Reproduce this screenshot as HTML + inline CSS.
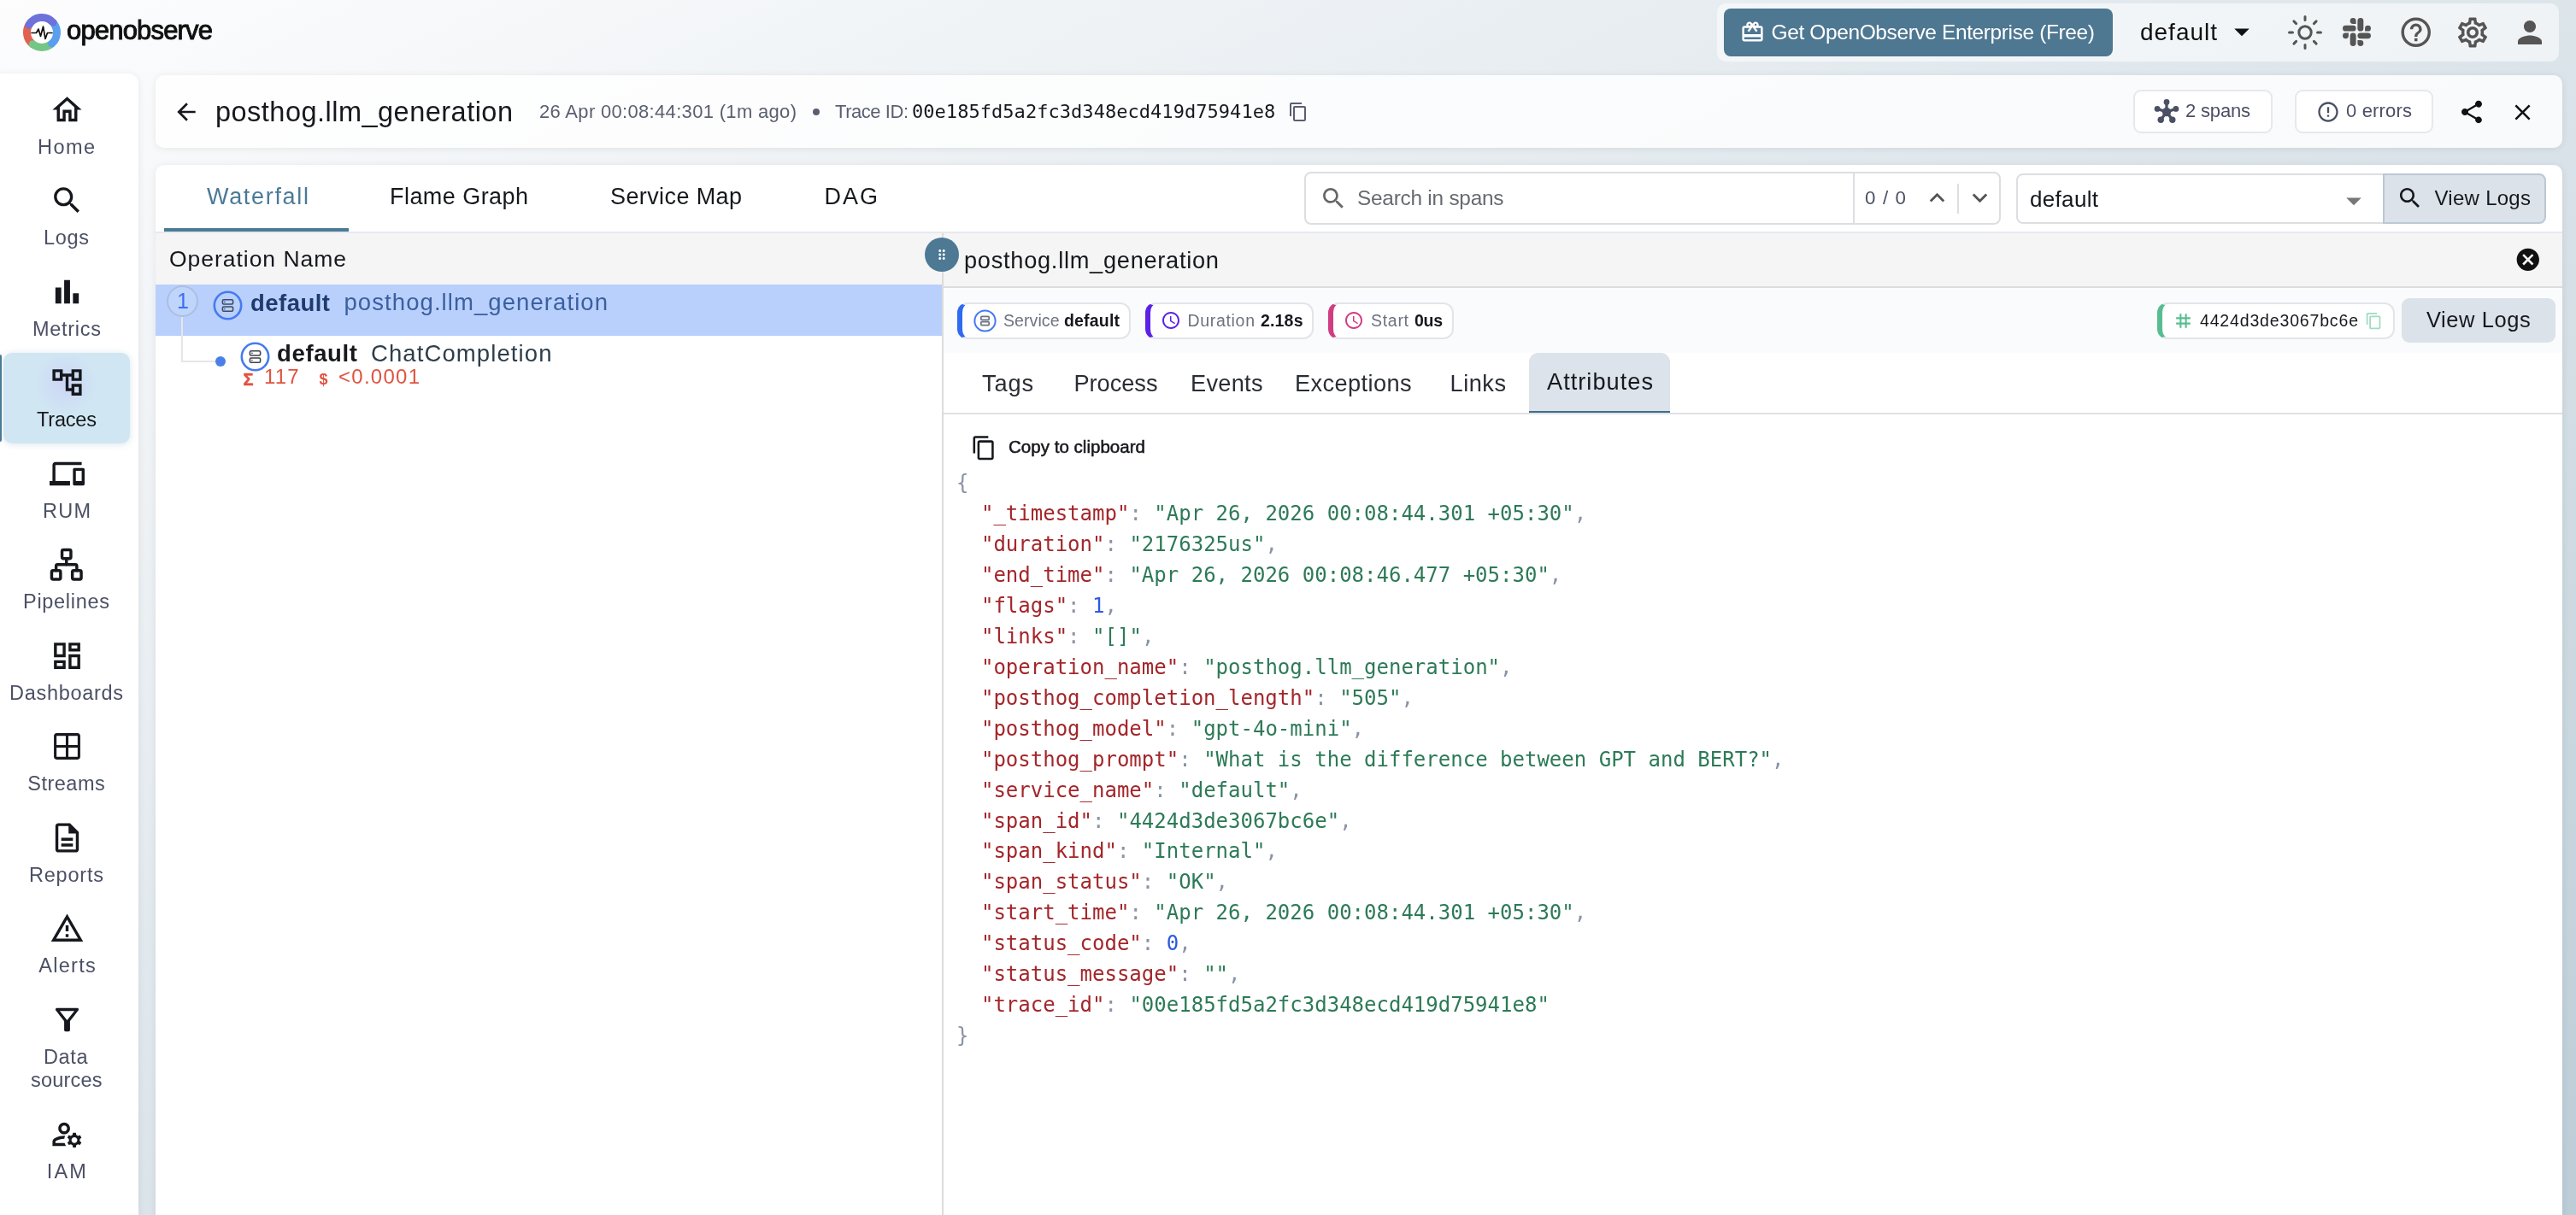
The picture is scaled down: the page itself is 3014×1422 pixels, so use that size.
<!DOCTYPE html>
<html lang="en"><head><meta charset="utf-8"><title>OpenObserve - Traces</title>
<style>
*{box-sizing:border-box}
html,body{margin:0;padding:0}
body{width:3014px;height:1422px;overflow:hidden;position:relative;font-family:"Liberation Sans",sans-serif;
background:linear-gradient(to bottom right,#fdfdfe 0%,#bccdd7 100%);}
#app{position:absolute;left:0;top:0;width:3014px;height:1422px;will-change:transform}
.a{position:absolute;display:block}
.t{position:absolute;white-space:pre;line-height:1;display:block}
.card{position:absolute;background:#fff;border-radius:10px;box-shadow:0 1px 8px rgba(0,0,0,.08)}
</style></head>
<body>
<div id="app">
<svg class="a" style="left:24px;top:13px" width="50" height="50" viewBox="-25 -25 50 50" fill="none" stroke-width="9" stroke-linecap="round">
<circle r="13" fill="#fff" stroke="none"/>
<path d="M-10.77 13.79 A17.5 17.5 0 0 1 -14.84 -9.27" stroke="#e2604f"/>
<path d="M10.77 13.79 A17.5 17.5 0 0 1 -10.77 13.79" stroke="#74c686"/>
<path d="M13.79 -10.77 A17.5 17.5 0 0 1 11.71 13.01" stroke="#5a9fee"/>
<path d="M-15.16 -8.75 A17.5 17.5 0 0 1 13.01 -11.71" stroke="#6d72db"/>
<path d="M-12 0.5 H-6.5 L-4 -4 L-1.5 4.5 L1.5 -7 L4 7.5 L6.5 0.5 H12" stroke="#111" stroke-width="1.7" stroke-linejoin="round" stroke-linecap="round"/>
</svg>
<span id="logo" class="t" style="left:78.00px;top:19.76px;font-size:31px;color:#111;letter-spacing:-0.825px;-webkit-text-stroke:0.95px #111;">openobserve</span>
<div class="a" style="left:2009px;top:4px;width:985px;height:68px;background:rgba(255,255,255,.55);border-radius:10px"></div>
<div class="a" style="left:2017px;top:10px;width:455px;height:56px;background:#4e7791;border-radius:8px"></div>
<svg class="a" style="left:2036px;top:23px" width="29" height="29" viewBox="0 0 24 24" fill="#fff" ><path d="M20 6h-2.18c.11-.31.18-.65.18-1 0-1.66-1.34-3-3-3-1.05 0-1.96.54-2.5 1.35l-.5.67-.5-.68C10.960 2.54 10.050 2 9 2 7.340 2 6 3.340 6 5c0 .35.07.69.18 1H4c-1.110 0-1.990.89-1.990 2L2 19c0 1.110.89 2 2 2h16c1.110 0 2-.89 2-2V8c0-1.110-.89-2-2-2zm-5-2c.55 0 1 .45 1 1s-.45 1-1 1-1-.45-1-1 .45-1 1-1zM9 4c.55 0 1 .45 1 1s-.45 1-1 1-1-.45-1-1 .45-1 1-1zm11 15H4v-2h16v2zm0-5H4V8h5.080L7 10.830 8.620 12 11 8.760l1-1.360 1 1.360L15.380 12 17 10.830 14.920 8H20v6z"/></svg>
<span id="ent" class="t" style="left:2072.50px;top:25.51px;font-size:24.5px;color:#fff;letter-spacing:-0.385px;">Get OpenObserve Enterprise (Free)</span>
<span id="org" class="t" style="left:2504.00px;top:23.55px;font-size:28px;color:#111;letter-spacing:0.987px;">default</span>
<svg class="a" style="left:2602px;top:16px" width="42" height="42" viewBox="0 0 24 24" fill="#111" ><path d="M7 10l5 5 5-5z"/></svg>
<svg class="a" style="left:2675px;top:16px" width="44" height="44" viewBox="-22 -22 44 44" fill="none" stroke="#555" stroke-width="3" stroke-linecap="round">
<circle r="7.2"/>
<path d="M0 -18.5V-14.5M0 18.500V14.500M-18.500 0H-14.500M18.500 0H14.500M-13.100 -13.100L-10.400 -10.400M13.100 13.100L10.400 10.400M-13.100 13.100L-10.400 10.400M13.100 -13.100L10.400 -10.400"/>
</svg>
<svg class="a" style="left:2741px;top:20.5px" width="33" height="33" viewBox="0 0 24 24" fill="#555"><path d="M5.042 15.165a2.528 2.528 0 0 1-2.52 2.523A2.528 2.528 0 0 1 0 15.165a2.527 2.527 0 0 1 2.522-2.52h2.52v2.52zM6.313 15.165a2.527 2.527 0 0 1 2.521-2.52 2.527 2.527 0 0 1 2.521 2.52v6.313A2.528 2.528 0 0 1 8.834 24a2.528 2.528 0 0 1-2.521-2.522v-6.313zM8.834 5.042a2.528 2.528 0 0 1-2.521-2.52A2.528 2.528 0 0 1 8.834 0a2.528 2.528 0 0 1 2.521 2.522v2.52H8.834zM8.834 6.313a2.528 2.528 0 0 1 2.521 2.521 2.528 2.528 0 0 1-2.521 2.521H2.522A2.528 2.528 0 0 1 0 8.834a2.528 2.528 0 0 1 2.522-2.521h6.312zM18.956 8.834a2.528 2.528 0 0 1 2.522-2.521A2.528 2.528 0 0 1 24 8.834a2.528 2.528 0 0 1-2.522 2.521h-2.522V8.834zM17.688 8.834a2.528 2.528 0 0 1-2.523 2.521 2.527 2.527 0 0 1-2.52-2.521V2.522A2.527 2.527 0 0 1 15.165 0a2.528 2.528 0 0 1 2.523 2.522v6.312zM15.165 18.956a2.528 2.528 0 0 1 2.523 2.522A2.528 2.528 0 0 1 15.165 24a2.527 2.527 0 0 1-2.520-2.522v-2.522h2.520zM15.165 17.688a2.527 2.527 0 0 1-2.520-2.523 2.526 2.526 0 0 1 2.520-2.520h6.313A2.527 2.527 0 0 1 24 15.165a2.528 2.528 0 0 1-2.522 2.523h-6.313z"/></svg>
<svg class="a" style="left:2805.5px;top:16.5px" width="41.5" height="41.5" viewBox="0 0 24 24" fill="#555" ><path d="M11 18h2v-2h-2v2zm1-16C6.48 2 2 6.48 2 12s4.48 10 10 10 10-4.48 10-10S17.52 2 12 2zm0 18c-4.41 0-8-3.59-8-8s3.59-8 8-8 8 3.59 8 8-3.59 8-8 8zm0-14c-2.21 0-4 1.79-4 4h2c0-1.1.9-2 2-2s2 .9 2 2c0 2-3 1.75-3 5h2c0-2.25 3-2.5 3-5 0-2.21-1.79-4-4-4z"/></svg>
<svg class="a" style="left:2871.5px;top:16.5px" width="42" height="42" viewBox="0 0 24 24" fill="#555" ><path d="M19.43 12.98c.04-.32.07-.64.07-.98 0-.34-.03-.66-.07-.98l2.11-1.65c.19-.15.24-.42.12-.64l-2-3.46c-.09-.16-.26-.25-.44-.25-.06 0-.12.01-.17.03l-2.49 1c-.52-.4-1.08-.73-1.69-.98l-.38-2.65C14.46 2.18 14.25 2 14 2h-4c-.25 0-.46.18-.49.42l-.38 2.65c-.61.25-1.17.59-1.69.98l-2.49-1c-.06-.02-.12-.03-.18-.03-.17 0-.34.09-.43.25l-2 3.46c-.13.22-.07.49.12.64l2.11 1.65c-.04.32-.07.65-.07.98 0 .33.03.66.07.98l-2.11 1.65c-.19.15-.24.42-.12.64l2 3.46c.09.16.26.25.44.25.06 0 .12-.01.17-.03l2.49-1c.52.4 1.08.73 1.69.98l.38 2.65c.03.24.24.42.49.42h4c.25 0 .46-.18.49-.42l.38-2.65c.61-.25 1.17-.59 1.69-.98l2.49 1c.06.02.12.03.18.03.17 0 .34-.09.43-.25l2-3.46c.12-.22.07-.49-.12-.64l-2.11-1.65zm-1.98-1.71c.04.31.05.52.05.73 0 .21-.02.43-.05.73l-.14 1.13.89.7 1.08.84-.7 1.21-1.27-.51-1.04-.42-.9.68c-.43.32-.84.56-1.25.73l-1.06.43-.16 1.13-.2 1.35h-1.4l-.19-1.35-.16-1.13-1.06-.43c-.43-.18-.83-.41-1.23-.71l-.91-.7-1.06.43-1.27.51-.7-1.21 1.08-.84.89-.7-.14-1.13c-.03-.31-.05-.54-.05-.74s.02-.43.05-.73l.14-1.13-.89-.7-1.08-.84.7-1.21 1.27.51 1.04.42.9-.68c.43-.32.84-.56 1.25-.73l1.06-.43.16-1.13.2-1.35h1.39l.19 1.35.16 1.13 1.06.43c.43.18.83.41 1.23.71l.91.7 1.06-.43 1.27-.51.7 1.21-1.07.85-.89.7.14 1.13zM12 8c-2.21 0-4 1.79-4 4s1.79 4 4 4 4-1.79 4-4-1.79-4-4-4zm0 6c-1.1 0-2-.9-2-2s.9-2 2-2 2 .9 2 2-.9 2-2 2z"/></svg>
<svg class="a" style="left:2939px;top:16.5px" width="42" height="42" viewBox="0 0 24 24" fill="#555" ><path d="M12 12c2.21 0 4-1.79 4-4s-1.79-4-4-4-4 1.79-4 4 1.79 4 4 4zm0 2c-2.67 0-8 1.34-8 4v2h16v-2c0-2.66-5.33-4-8-4z"/></svg>
<div class="card" style="left:-12px;top:86px;width:174px;height:1360px;border-radius:12px"></div>
<div class="a" style="left:4px;top:413px;width:148px;height:106px;background:radial-gradient(circle 38px at 73px 36px,#ccd5f5 0%,#d0e7f3 100%);background-color:#d0e7f3;border-radius:10px;box-shadow:0 1px 9px rgba(80,130,160,.20)"></div>
<div class="a" style="left:0px;top:415px;width:2px;height:102px;background:#4a7a96;border-radius:0 2px 2px 0"></div>
<svg class="a" style="left:57.5px;top:107.5px" width="41" height="41" viewBox="0 0 24 24" fill="#16181d" ><path d="M12 5.69l5 4.5V18h-2v-6H9v6H7v-7.81l5-4.5M12 3L2 12h3v8h6v-6h2v6h6v-8h3L12 3z"/></svg>
<span id="s_Home" class="t" style="left:44.00px;top:161.36px;font-size:23.5px;color:#4b5064;letter-spacing:1.438px;">Home</span>
<svg class="a" style="left:57.5px;top:214.0px" width="41" height="41" viewBox="0 0 24 24" fill="#16181d" ><path d="M15.5 14h-.79l-.28-.27C15.41 12.59 16 11.11 16 9.5 16 5.91 13.09 3 9.5 3S3 5.91 3 9.5 5.91 16 9.5 16c1.61 0 3.09-.59 4.23-1.57l.27.28v.79l5 4.99L20.49 19l-4.99-5zm-6 0C7.01 14 5 11.99 5 9.5S7.01 5 9.5 5 14 7.01 14 9.5 11.99 14 9.5 14z"/></svg>
<span id="s_Logs" class="t" style="left:51.00px;top:267.36px;font-size:23.5px;color:#4b5064;letter-spacing:0.677px;">Logs</span>
<svg class="a" style="left:57.5px;top:320.5px" width="41" height="41" viewBox="0 0 24 24" fill="#16181d" ><path d="M4 9h4v11H4zm12 4h4v7h-4zm-6-9h4v16h-4z"/></svg>
<span id="s_Metrics" class="t" style="left:38.00px;top:374.36px;font-size:23.5px;color:#4b5064;letter-spacing:0.711px;">Metrics</span>
<svg class="a" style="left:57.5px;top:427.0px" width="41" height="41" viewBox="0 0 24 24" fill="#16181d" ><path d="M22 11V3h-7v3H9V3H2v8h7V8h2v10h4v3h7v-8h-7v3h-2V8h2v3h7zM7 9H4V5h3v4zm10 6h3v4h-3v-4zm0-10h3v4h-3V5z"/></svg>
<span id="s_Traces" class="t" style="left:43.00px;top:480.36px;font-size:23.5px;color:#16181d;letter-spacing:-0.191px;">Traces</span>
<svg class="a" style="left:57.5px;top:533.5px" width="41" height="41" viewBox="0 0 24 24" fill="#16181d" ><path d="M4 6h18V4H4c-1.1 0-2 .9-2 2v11H0v3h14v-3H4V6zm19 2h-6c-.55 0-1 .45-1 1v10c0 .55.45 1 1 1h6c.55 0 1-.45 1-1V9c0-.55-.45-1-1-1zm-1 9h-4v-7h4v7z"/></svg>
<span id="s_RUM" class="t" style="left:50.00px;top:586.86px;font-size:23.5px;color:#4b5064;letter-spacing:1.234px;">RUM</span>
<svg class="a" style="left:57px;top:640.0px" width="41.5" height="41.5" viewBox="0 0 24 24" fill="none" stroke="#16181d" stroke-width="2" stroke-linecap="round" stroke-linejoin="round"><rect x="16" y="16" width="6" height="6" rx="1"/><rect x="2" y="16" width="6" height="6" rx="1"/><rect x="9" y="2" width="6" height="6" rx="1"/><path d="M5 16v-3a1 1 0 0 1 1-1h12a1 1 0 0 1 1 1v3"/><path d="M12 12V8"/></svg>
<span id="s_Pipelines" class="t" style="left:27.00px;top:693.36px;font-size:23.5px;color:#4b5064;letter-spacing:0.703px;">Pipelines</span>
<svg class="a" style="left:57.5px;top:746.5px" width="41" height="41" viewBox="0 0 24 24" fill="#16181d" ><path d="M19 5v2h-4V5h4M9 5v6H5V5h4m10 8v6h-4v-6h4M9 17v2H5v-2h4M21 3h-8v6h8V3zM11 3H3v10h8V3zm10 8h-8v10h8V11zm-10 4H3v6h8v-6z"/></svg>
<span id="s_Dashboards" class="t" style="left:11.00px;top:799.86px;font-size:23.5px;color:#4b5064;letter-spacing:0.698px;">Dashboards</span>
<svg class="a" style="left:59.5px;top:855.0px" width="37" height="37" viewBox="0 0 24 24" fill="#16181d" ><path d="M20 2H4c-1.1 0-2 .9-2 2v16c0 1.1.9 2 2 2h16c1.1 0 2-.9 2-2V4c0-1.1-.9-2-2-2zm0 9h-7V4h7v7zm-9-7v7H4V4h7zm-7 9h7v7H4v-7zm9 7v-7h7v7h-7z"/></svg>
<span id="s_Streams" class="t" style="left:32.20px;top:906.36px;font-size:23.5px;color:#4b5064;letter-spacing:0.517px;">Streams</span>
<svg class="a" style="left:57.5px;top:959.5px" width="41" height="41" viewBox="0 0 24 24" fill="#16181d" ><path d="M8 16h8v2H8zm0-4h8v2H8zm6-10H6c-1.1 0-2 .9-2 2v16c0 1.1.89 2 1.99 2H18c1.1 0 2-.9 2-2V8l-6-6zm4 18H6V4h7v5h5v11z"/></svg>
<span id="s_Reports" class="t" style="left:34.00px;top:1012.86px;font-size:23.5px;color:#4b5064;letter-spacing:0.784px;">Reports</span>
<svg class="a" style="left:57.5px;top:1066.0px" width="41" height="41" viewBox="0 0 24 24" fill="#16181d" ><path d="M12 5.99L19.53 19H4.47L12 5.99M12 2L1 21h22L12 2zm1 14h-2v2h2v-2zm0-6h-2v4h2v-4z"/></svg>
<span id="s_Alerts" class="t" style="left:45.20px;top:1119.36px;font-size:23.5px;color:#4b5064;letter-spacing:1.304px;">Alerts</span>
<svg class="a" style="left:57.5px;top:1172.5px" width="41" height="41" viewBox="0 0 24 24" fill="#16181d" ><path d="M7 6h10l-5.01 6.3L7 6zm-2.75-.39C6.27 8.2 10 13 10 13v6c0 .55.45 1 1 1h2c.55 0 1-.45 1-1v-6s3.72-4.8 5.74-7.39c.51-.66.04-1.61-.79-1.61H5.04c-.83 0-1.3.95-.79 1.61z"/></svg>
<span id="s_Data" class="t" style="left:51.00px;top:1225.86px;font-size:23.5px;color:#4b5064;letter-spacing:0.653px;">Data</span>
<svg class="a" style="left:57.5px;top:1307.0px" width="41" height="41" viewBox="0 0 24 24" fill="#16181d" ><path d="M4 18v-.65c0-.34.16-.66.41-.81C6.1 15.53 8.03 15 10 15c.03 0 .05 0 .08.01.1-.7.3-1.37.59-1.98-.22-.02-.44-.03-.67-.03-2.42 0-4.68.67-6.61 1.82-.88.52-1.39 1.5-1.39 2.53V20h9.26c-.42-.6-.75-1.28-.97-2H4zm6-6c2.21 0 4-1.79 4-4s-1.79-4-4-4-4 1.79-4 4 1.79 4 4 4zm0-6c1.1 0 2 .9 2 2s-.9 2-2 2-2-.9-2-2 .9-2 2-2zm10.750 10c0-.22-.03-.42-.06-.63l1.140-1.010-1-1.730-1.450.49c-.32-.27-.68-.48-1.080-.63L18 11h-2l-.3 1.490c-.4.15-.76.36-1.080.63l-1.450-.49-1 1.730 1.140 1.010c-.03.21-.06.41-.06.63s.03.42.06.63l-1.140 1.010 1 1.730 1.450-.49c.32.27.68.48 1.080.63L16 21h2l.3-1.490c.4-.15.76-.36 1.080-.63l1.450.49 1-1.730-1.140-1.010c.03-.21.06-.41.06-.63zM17 18c-1.100 0-2-.9-2-2s.9-2 2-2 2 .9 2 2-.9 2-2 2z"/></svg>
<span id="s_IAM" class="t" style="left:54.80px;top:1360.36px;font-size:23.5px;color:#4b5064;letter-spacing:2.109px;">IAM</span>
<span id="s_sources" class="t" style="left:36.00px;top:1253.36px;font-size:23.5px;color:#4b5064;letter-spacing:0.184px;">sources</span>
<div class="card" style="left:182px;top:88px;width:2816px;height:85px;background:rgba(255,255,255,.82)"></div>
<svg class="a" style="left:202px;top:115px" width="32" height="32" viewBox="0 0 24 24" fill="#16181d" ><path d="M20 11H7.83l5.59-5.59L12 4l-8 8 8 8 1.41-1.41L7.83 13H20v-2z"/></svg>
<span id="title" class="t" style="left:252.00px;top:115.24px;font-size:32.5px;color:#16181d;letter-spacing:0.482px;">posthog.llm_generation</span>
<span id="ts" class="t" style="left:631.00px;top:119.63px;font-size:22px;color:#5a5f70;letter-spacing:0.321px;">26 Apr 00:08:44:301 (1m ago)</span>
<div class="a" style="left:950.5px;top:127px;width:8.0px;height:8px;background:#5a5f70;border-radius:50%"></div>
<span id="tidl" class="t" style="left:977.00px;top:119.63px;font-size:22px;color:#5a5f70;letter-spacing:-0.457px;">Trace ID:</span>
<span id="tid" class="t" style="left:1067.00px;top:119.89px;font-size:22px;color:#16181d;font-family:'DejaVu Sans Mono', 'Liberation Mono', monospace;letter-spacing:0.044px;">00e185fd5a2fc3d348ecd419d75941e8</span>
<svg class="a" style="left:1507.4px;top:119px" width="24" height="24" viewBox="0 0 24 24" fill="#5a5f70" ><path d="M16 1H4c-1.1 0-2 .9-2 2v14h2V3h12V1zm3 4H8c-1.1 0-2 .9-2 2v14c0 1.1.9 2 2 2h11c1.1 0 2-.9 2-2V7c0-1.1-.9-2-2-2zm0 16H8V7h11v14z"/></svg>
<div class="a" style="left:2495.5px;top:105px;width:163.5px;height:51px;background:#fff;border:2px solid #e6e8ed;border-radius:9px"></div>
<svg class="a" style="left:2519px;top:115px" width="32" height="32" viewBox="-16 -16 32 32" fill="#4b5064" stroke="#4b5064" stroke-width="3.3">
<path d="M0 0L0 -11.500M0 0L10.900 -3.600M0 0L6.800 9.300M0 0L-6.800 9.300M0 0L-10.900 -3.600" fill="none"/>
<circle r="5.200" stroke="none"/><circle cx="0" cy="-11.500" r="3.400" stroke="none"/><circle cx="10.900" cy="-3.600" r="3.400" stroke="none"/><circle cx="6.800" cy="9.300" r="3.700" stroke="none"/><circle cx="-6.800" cy="9.300" r="3.700" stroke="none"/><circle cx="-10.900" cy="-3.600" r="3.400" stroke="none"/>
</svg>
<span id="spans" class="t" style="left:2557.00px;top:119.13px;font-size:22px;color:#4b5064;letter-spacing:-0.177px;">2 spans</span>
<div class="a" style="left:2684.5px;top:105px;width:162.5px;height:51px;background:#fff;border:2px solid #e6e8ed;border-radius:9px"></div>
<svg class="a" style="left:2709.5px;top:117px" width="28" height="28" viewBox="0 0 24 24" fill="#4b5064" ><path d="M11 15h2v2h-2zm0-8h2v6h-2zm.99-5C6.47 2 2 6.48 2 12s4.47 10 9.990 10C17.520 22 22 17.520 22 12S17.520 2 11.990 2zM12 20c-4.420 0-8-3.580-8-8s3.580-8 8-8 8 3.580 8 8-3.580 8-8 8z"/></svg>
<span id="errors" class="t" style="left:2745.00px;top:119.13px;font-size:22px;color:#4b5064;letter-spacing:0.172px;">0 errors</span>
<svg class="a" style="left:2876px;top:115px" width="32" height="32" viewBox="0 0 24 24" fill="#111" ><path d="M18 16.08c-.76 0-1.44.3-1.96.77L8.91 12.7c.05-.23.09-.46.09-.7s-.04-.47-.09-.7l7.05-4.11c.54.5 1.25.81 2.04.81 1.66 0 3-1.34 3-3s-1.34-3-3-3-3 1.34-3 3c0 .24.04.47.09.7L8.04 9.81C7.5 9.31 6.79 9 6 9c-1.66 0-3 1.34-3 3s1.34 3 3 3c.79 0 1.5-.31 2.04-.81l7.12 4.16c-.05.21-.08.43-.08.65 0 1.61 1.31 2.92 2.92 2.92 1.61 0 2.92-1.31 2.92-2.920s-1.310-2.920-2.920-2.920z"/></svg>
<svg class="a" style="left:2936.25px;top:115.5px" width="31" height="31" viewBox="0 0 24 24" fill="#111" ><path d="M19 6.41L17.59 5 12 10.59 6.41 5 5 6.41 10.59 12 5 17.59 6.41 19 12 13.41 17.59 19 19 17.59 13.41 12z"/></svg>
<div class="card" style="left:182px;top:193px;width:2816px;height:1260px"></div>
<span id="tab1" class="t" style="left:242.00px;top:216.64px;font-size:27px;color:#4a7a96;letter-spacing:1.684px;">Waterfall</span>
<span id="tab2" class="t" style="left:456.00px;top:216.64px;font-size:27px;color:#16181d;letter-spacing:0.444px;">Flame Graph</span>
<span id="tab3" class="t" style="left:714.00px;top:216.64px;font-size:27px;color:#16181d;letter-spacing:0.394px;">Service Map</span>
<span id="tab4" class="t" style="left:964.50px;top:216.64px;font-size:27px;color:#16181d;letter-spacing:1.992px;">DAG</span>
<div class="a" style="left:192px;top:267px;width:216px;height:4px;background:#4a7a96"></div>
<div class="a" style="left:1526px;top:200.5px;width:815px;height:62.5px;border:2px solid #dcdee1;border-radius:8px;background:#fff"></div>
<div class="a" style="left:2168px;top:202px;width:2px;height:59.5px;background:#dcdee1"></div>
<svg class="a" style="left:1543.9px;top:215.9px" width="32.6" height="32.6" viewBox="0 0 24 24" fill="#666" ><path d="M15.5 14h-.79l-.28-.27C15.41 12.59 16 11.11 16 9.5 16 5.91 13.09 3 9.5 3S3 5.91 3 9.5 5.91 16 9.5 16c1.61 0 3.09-.59 4.23-1.57l.27.28v.79l5 4.99L20.49 19l-4.99-5zm-6 0C7.01 14 5 11.99 5 9.5S7.01 5 9.5 5 14 7.01 14 9.5 11.99 14 9.5 14z"/></svg>
<span id="srch" class="t" style="left:1588.00px;top:219.85px;font-size:24.4px;color:#666b70;letter-spacing:-0.243px;">Search in spans</span>
<span id="zz" class="t" style="left:2182.00px;top:221.12px;font-size:22.3px;color:#4b5064;letter-spacing:1.152px;">0 / 0</span>
<svg class="a" style="left:2248.5px;top:214.4px" width="35" height="35" viewBox="0 0 24 24" fill="#555" ><path d="M7.41 15.41L12 10.830l4.590 4.580L18 14l-6-6-6 6z"/></svg>
<div class="a" style="left:2290px;top:214.5px;width:2px;height:35.0px;background:#dcdee1"></div>
<svg class="a" style="left:2298.5px;top:213.6px" width="35" height="35" viewBox="0 0 24 24" fill="#555" ><path d="M7.41 8.590L12 13.170l4.590-4.580L18 10l-6 6-6-6 1.410-1.410z"/></svg>
<div class="a" style="left:2358.5px;top:203px;width:431.5px;height:58.5px;border:2px solid #dcdee1;border-radius:8px 0 0 8px;background:#fff"></div>
<span id="sel" class="t" style="left:2375.00px;top:219.99px;font-size:26px;color:#16181d;letter-spacing:0.321px;">default</span>
<svg class="a" style="left:2733px;top:213.5px" width="42" height="42" viewBox="0 0 24 24" fill="#777" ><path d="M7 10l5 5 5-5z"/></svg>
<div class="a" style="left:2788px;top:202.5px;width:191px;height:59.5px;background:#dbe2ea;border:2px solid #bcc8d3;border-radius:0 8px 8px 0"></div>
<svg class="a" style="left:2804px;top:216px" width="31.6" height="31.6" viewBox="0 0 24 24" fill="#16181d" ><path d="M15.5 14h-.79l-.28-.27C15.41 12.59 16 11.11 16 9.5 16 5.91 13.09 3 9.5 3S3 5.91 3 9.5 5.91 16 9.5 16c1.61 0 3.09-.59 4.23-1.57l.27.28v.79l5 4.99L20.49 19l-4.99-5zm-6 0C7.01 14 5 11.99 5 9.5S7.01 5 9.5 5 14 7.01 14 9.5 11.99 14 9.5 14z"/></svg>
<span id="vl1" class="t" style="left:2848.50px;top:219.68px;font-size:24px;color:#16181d;letter-spacing:0.275px;">View Logs</span>
<div class="a" style="left:182px;top:271px;width:2816px;height:2px;background:#e6e9ee"></div>
<div class="a" style="left:182px;top:273px;width:920px;height:60px;background:#f5f5f5"></div>
<span id="opn" class="t" style="left:198.00px;top:290.32px;font-size:26.5px;color:#16181d;letter-spacing:0.966px;">Operation Name</span>
<div class="a" style="left:182px;top:333px;width:920px;height:59.5px;background:#b8d0fb"></div>
<div class="a" style="left:212px;top:371px;width:2px;height:52px;background:#e6e6e6"></div>
<div class="a" style="left:212px;top:421.5px;width:40px;height:2.0px;background:#e6e6e6"></div>
<div class="a" style="left:194.5px;top:333.5px;width:37.0px;height:37.0px;border:2px solid rgba(150,160,190,.45);border-radius:50%;background:rgba(255,255,255,.12)"></div>
<span id="one" class="t" style="left:207.00px;top:339.84px;font-size:25px;color:#3b6ef5;letter-spacing:0.000px;">1</span>
<svg class="a" style="left:248.5px;top:340px" width="35" height="35" viewBox="-17.500 -17.500 35 35" fill="none">
<circle r="15.700" stroke="#457af2" stroke-width="2.6" fill="none"/>
<rect x="-6.100" y="-6.700" width="12.200" height="5.200" rx="1.400" stroke="#3d4a66" stroke-width="1.600"/>
<rect x="-6.100" y="1.500" width="12.200" height="5.200" rx="1.400" stroke="#3d4a66" stroke-width="1.600"/>
<circle cx="-3.600" cy="-4.100" r=".8" fill="#3d4a66"/><circle cx="-3.600" cy="4.100" r=".8" fill="#3d4a66"/>
</svg>
<span id="d1" class="t" style="left:293.00px;top:340.72px;font-size:27.5px;color:#1f3a6e;font-weight:700;letter-spacing:0.477px;">default</span>
<span id="r1" class="t" style="left:402.50px;top:340.47px;font-size:27.5px;color:#3b5fa0;letter-spacing:1.076px;">posthog.llm_generation</span>
<div class="a" style="left:252px;top:417px;width:12px;height:12px;background:#4a7fe8;border-radius:50%"></div>
<svg class="a" style="left:280.5px;top:400px" width="35" height="35" viewBox="-17.500 -17.500 35 35" fill="none">
<circle r="15.700" stroke="#457af2" stroke-width="2.6" fill="#fff"/>
<rect x="-6.100" y="-6.700" width="12.200" height="5.200" rx="1.400" stroke="#3d4248" stroke-width="1.600"/>
<rect x="-6.100" y="1.500" width="12.200" height="5.200" rx="1.400" stroke="#3d4248" stroke-width="1.600"/>
<circle cx="-3.600" cy="-4.100" r=".8" fill="#3d4248"/><circle cx="-3.600" cy="4.100" r=".8" fill="#3d4248"/>
</svg>
<span id="d2" class="t" style="left:324.00px;top:400.47px;font-size:27.5px;color:#16181d;font-weight:700;letter-spacing:0.643px;">default</span>
<span id="r2" class="t" style="left:434.00px;top:399.72px;font-size:27.5px;color:#2d3e4a;letter-spacing:1.101px;">ChatCompletion</span>
<span id="sig" class="t" style="left:284.50px;top:433.82px;font-size:20px;color:#e0533f;font-weight:700;letter-spacing:0.000px;-webkit-text-stroke:0.5px #e0533f;">Σ</span>
<span id="n117" class="t" style="left:309.00px;top:428.68px;font-size:24px;color:#e0533f;letter-spacing:1.117px;">117</span>
<span id="dol" class="t" style="left:373.50px;top:434.76px;font-size:18px;color:#e0533f;font-weight:700;letter-spacing:0.000px;">$</span>
<span id="cost" class="t" style="left:396.00px;top:428.68px;font-size:24px;color:#e0533f;letter-spacing:1.263px;">&lt;0.0001</span>
<div class="a" style="left:1102px;top:273px;width:2px;height:1149px;background:#dcdcdc"></div>
<div class="a" style="left:1104px;top:273px;width:1894px;height:62px;background:#f5f5f5"></div>
<div class="a" style="left:1104px;top:335px;width:1894px;height:2px;background:#dcdcdc"></div>
<span id="dt" class="t" style="left:1128.00px;top:290.98px;font-size:27.2px;color:#16181d;letter-spacing:0.731px;">posthog.llm_generation</span>
<svg class="a" style="left:2941.8px;top:287.8px" width="31.6" height="31.6" viewBox="0 0 24 24" fill="#111" ><path d="M12 2C6.47 2 2 6.47 2 12s4.47 10 10 10 10-4.47 10-10S17.53 2 12 2zm5 13.59L15.59 17 12 13.41 8.41 17 7 15.59 10.59 12 7 8.41 8.41 7 12 10.59 15.59 7 17 8.41 13.41 12 17 15.59z"/></svg>
<div class="a" style="left:1082px;top:278px;width:40px;height:40px;background:#4d7994;border-radius:50%"></div>
<svg class="a" style="left:1093px;top:289px" width="18" height="18" viewBox="0 0 24 24" fill="#fff" ><path d="M11 18c0 1.100-.9 2-2 2s-2-.9-2-2 .9-2 2-2 2 .9 2 2zm-2-8c-1.100 0-2 .9-2 2s.9 2 2 2 2-.9 2-2-.9-2-2-2zm0-6c-1.100 0-2 .9-2 2s.9 2 2 2 2-.9 2-2-.9-2-2-2zm6 4c1.100 0 2-.9 2-2s-.9-2-2-2-2 .9-2 2 .9 2 2 2zm0 2c-1.100 0-2 .9-2 2s.9 2 2 2 2-.9 2-2-.9-2-2-2zm0 6c-1.100 0-2 .9-2 2s.9 2 2 2 2-.9 2-2-.9-2-2-2z"/></svg>
<div class="a" style="left:1104px;top:337px;width:1894px;height:75.5px;background:#fafbfc"></div>
<div class="a" style="left:1120px;top:353.5px;width:203px;height:43.0px;background:#fff;border:2px solid #e2e5ea;border-left:6.5px solid #2f6bf2;border-radius:12px"></div>
<svg class="a" style="left:1138.5px;top:361.5px" width="27" height="27" viewBox="-17.500 -17.500 35 35" fill="none">
<circle r="15.700" stroke="#457af2" stroke-width="2.6" fill="none"/>
<rect x="-6.100" y="-6.700" width="12.200" height="5.200" rx="1.400" stroke="#6b7280" stroke-width="2.300"/>
<rect x="-6.100" y="1.500" width="12.200" height="5.200" rx="1.400" stroke="#6b7280" stroke-width="2.300"/>
<circle cx="-3.600" cy="-4.100" r="0" fill="#6b7280"/><circle cx="-3.600" cy="4.100" r="0" fill="#6b7280"/>
</svg>
<span id="b1a" class="t" style="left:1174.00px;top:365.74px;font-size:19.5px;color:#6b7280;letter-spacing:0.078px;">Service</span>
<span id="b1b" class="t" style="left:1245.00px;top:365.74px;font-size:19.5px;color:#16181d;font-weight:700;letter-spacing:0.179px;">default</span>
<div class="a" style="left:1340px;top:353.5px;width:197px;height:43.0px;background:#fff;border:2px solid #e2e5ea;border-left:6.5px solid #5b21e6;border-radius:12px"></div>
<svg class="a" style="left:1358px;top:363px" width="24" height="24" viewBox="0 0 24 24" fill="#5b21e6" ><path d="M11.99 2C6.47 2 2 6.48 2 12s4.47 10 9.990 10C17.520 22 22 17.520 22 12S17.520 2 11.990 2zM12 20c-4.420 0-8-3.580-8-8s3.580-8 8-8 8 3.580 8 8-3.580 8-8 8zm.5-13H11v6l5.250 3.150.75-1.230-4.500-2.670z"/></svg>
<span id="b2a" class="t" style="left:1389.50px;top:365.74px;font-size:19.5px;color:#6b7280;letter-spacing:0.683px;">Duration</span>
<span id="b2b" class="t" style="left:1475.00px;top:365.74px;font-size:19.5px;color:#16181d;font-weight:700;letter-spacing:0.171px;">2.18s</span>
<div class="a" style="left:1553.75px;top:353.5px;width:147.25px;height:43.0px;background:#fff;border:2px solid #e2e5ea;border-left:6.5px solid #d03d83;border-radius:12px"></div>
<svg class="a" style="left:1572px;top:363px" width="24" height="24" viewBox="0 0 24 24" fill="#d03d83" ><path d="M11.99 2C6.47 2 2 6.48 2 12s4.47 10 9.990 10C17.520 22 22 17.520 22 12S17.520 2 11.990 2zM12 20c-4.420 0-8-3.580-8-8s3.580-8 8-8 8 3.580 8 8-3.580 8-8 8zm.5-13H11v6l5.250 3.150.75-1.230-4.500-2.670z"/></svg>
<span id="b3a" class="t" style="left:1604.00px;top:365.74px;font-size:19.5px;color:#6b7280;letter-spacing:0.703px;">Start</span>
<span id="b3b" class="t" style="left:1655.00px;top:365.74px;font-size:19.5px;color:#16181d;font-weight:700;letter-spacing:-0.305px;">0us</span>
<div class="a" style="left:2524px;top:353.5px;width:277.5px;height:43.0px;background:#fff;border:2px solid #e2e5ea;border-left:6.5px solid #57bd91;border-radius:12px"></div>
<svg class="a" style="left:2541.5px;top:362.5px" width="25" height="25" viewBox="0 0 24 24" fill="#57bd91" ><path d="M20 10V8h-4V4h-2v4h-4V4H8v4H4v2h4v4H4v2h4v4h2v-4h4v4h2v-4h4v-2h-4v-4h4zm-6 4h-4v-4h4v4z"/></svg>
<span id="sid" class="t" style="left:2574.00px;top:365.74px;font-size:19.5px;color:#16181d;letter-spacing:0.837px;">4424d3de3067bc6e</span>
<svg class="a" style="left:2767px;top:364.5px" width="21" height="21" viewBox="0 0 24 24" fill="#9fdcc0" ><path d="M16 1H4c-1.1 0-2 .9-2 2v14h2V3h12V1zm3 4H8c-1.1 0-2 .9-2 2v14c0 1.1.9 2 2 2h11c1.1 0 2-.9 2-2V7c0-1.1-.9-2-2-2zm0 16H8V7h11v14z"/></svg>
<div class="a" style="left:2810px;top:349px;width:180px;height:52px;background:#dbe2ea;border-radius:9px"></div>
<span id="vl2" class="t" style="left:2839.00px;top:362.41px;font-size:25.5px;color:#16181d;letter-spacing:0.575px;">View Logs</span>
<div class="a" style="left:1789px;top:413px;width:165px;height:69.5px;background:#dce3ea;border-radius:11px 11px 0 0"></div>
<div class="a" style="left:1104px;top:483px;width:1894px;height:1.75px;background:#dfe1e4"></div>
<div class="a" style="left:1789px;top:480.5px;width:165px;height:2.0px;background:#3f6e8c"></div>
<span id="dtab0" class="t" style="left:1149.00px;top:435.23px;font-size:27.2px;color:#2a2d34;letter-spacing:0.854px;">Tags</span>
<span id="dtab1" class="t" style="left:1256.50px;top:435.23px;font-size:27.2px;color:#2a2d34;letter-spacing:-0.036px;">Process</span>
<span id="dtab2" class="t" style="left:1393.00px;top:435.23px;font-size:27.2px;color:#2a2d34;letter-spacing:0.275px;">Events</span>
<span id="dtab3" class="t" style="left:1515.00px;top:435.23px;font-size:27.2px;color:#2a2d34;letter-spacing:0.389px;">Exceptions</span>
<span id="dtab4" class="t" style="left:1696.50px;top:435.23px;font-size:27.2px;color:#2a2d34;letter-spacing:0.508px;">Links</span>
<span id="dtab5" class="t" style="left:1810.00px;top:433.23px;font-size:27.2px;color:#16181d;letter-spacing:1.018px;">Attributes</span>
<svg class="a" style="left:1136px;top:508.5px" width="30.5" height="30.5" viewBox="0 0 24 24" fill="#16181d" ><path d="M16 1H4c-1.1 0-2 .9-2 2v14h2V3h12V1zm3 4H8c-1.1 0-2 .9-2 2v14c0 1.1.9 2 2 2h11c1.1 0 2-.9 2-2V7c0-1.1-.9-2-2-2zm0 16H8V7h11v14z"/></svg>
<span id="ctc" class="t" style="left:1180.00px;top:513.15px;font-size:20.5px;color:#16181d;letter-spacing:0.028px;-webkit-text-stroke:0.55px #16181d;">Copy to clipboard</span>
<pre id="json" class="a" style="left:1119px;top:548.2px;margin:0;font-family:'DejaVu Sans Mono', 'Liberation Mono', monospace;font-size:24px;line-height:35.93px;letter-spacing:0.005px"><span style="color:#8a93a5">{</span>
  <span style="color:#a3262a">&quot;_timestamp&quot;</span><span style="color:#8a93a5">:</span> <span style="color:#2d7a57">&quot;Apr 26, 2026 00:08:44.301 +05:30&quot;</span><span style="color:#8a93a5">,</span>
  <span style="color:#a3262a">&quot;duration&quot;</span><span style="color:#8a93a5">:</span> <span style="color:#2d7a57">&quot;2176325us&quot;</span><span style="color:#8a93a5">,</span>
  <span style="color:#a3262a">&quot;end_time&quot;</span><span style="color:#8a93a5">:</span> <span style="color:#2d7a57">&quot;Apr 26, 2026 00:08:46.477 +05:30&quot;</span><span style="color:#8a93a5">,</span>
  <span style="color:#a3262a">&quot;flags&quot;</span><span style="color:#8a93a5">:</span> <span style="color:#2b59e0">1</span><span style="color:#8a93a5">,</span>
  <span style="color:#a3262a">&quot;links&quot;</span><span style="color:#8a93a5">:</span> <span style="color:#2d7a57">&quot;[]&quot;</span><span style="color:#8a93a5">,</span>
  <span style="color:#a3262a">&quot;operation_name&quot;</span><span style="color:#8a93a5">:</span> <span style="color:#2d7a57">&quot;posthog.llm_generation&quot;</span><span style="color:#8a93a5">,</span>
  <span style="color:#a3262a">&quot;posthog_completion_length&quot;</span><span style="color:#8a93a5">:</span> <span style="color:#2d7a57">&quot;505&quot;</span><span style="color:#8a93a5">,</span>
  <span style="color:#a3262a">&quot;posthog_model&quot;</span><span style="color:#8a93a5">:</span> <span style="color:#2d7a57">&quot;gpt-4o-mini&quot;</span><span style="color:#8a93a5">,</span>
  <span style="color:#a3262a">&quot;posthog_prompt&quot;</span><span style="color:#8a93a5">:</span> <span style="color:#2d7a57">&quot;What is the difference between GPT and BERT?&quot;</span><span style="color:#8a93a5">,</span>
  <span style="color:#a3262a">&quot;service_name&quot;</span><span style="color:#8a93a5">:</span> <span style="color:#2d7a57">&quot;default&quot;</span><span style="color:#8a93a5">,</span>
  <span style="color:#a3262a">&quot;span_id&quot;</span><span style="color:#8a93a5">:</span> <span style="color:#2d7a57">&quot;4424d3de3067bc6e&quot;</span><span style="color:#8a93a5">,</span>
  <span style="color:#a3262a">&quot;span_kind&quot;</span><span style="color:#8a93a5">:</span> <span style="color:#2d7a57">&quot;Internal&quot;</span><span style="color:#8a93a5">,</span>
  <span style="color:#a3262a">&quot;span_status&quot;</span><span style="color:#8a93a5">:</span> <span style="color:#2d7a57">&quot;OK&quot;</span><span style="color:#8a93a5">,</span>
  <span style="color:#a3262a">&quot;start_time&quot;</span><span style="color:#8a93a5">:</span> <span style="color:#2d7a57">&quot;Apr 26, 2026 00:08:44.301 +05:30&quot;</span><span style="color:#8a93a5">,</span>
  <span style="color:#a3262a">&quot;status_code&quot;</span><span style="color:#8a93a5">:</span> <span style="color:#2b59e0">0</span><span style="color:#8a93a5">,</span>
  <span style="color:#a3262a">&quot;status_message&quot;</span><span style="color:#8a93a5">:</span> <span style="color:#2d7a57">&quot;&quot;</span><span style="color:#8a93a5">,</span>
  <span style="color:#a3262a">&quot;trace_id&quot;</span><span style="color:#8a93a5">:</span> <span style="color:#2d7a57">&quot;00e185fd5a2fc3d348ecd419d75941e8&quot;</span>
<span style="color:#8a93a5">}</span></pre>
</div>
</body></html>
